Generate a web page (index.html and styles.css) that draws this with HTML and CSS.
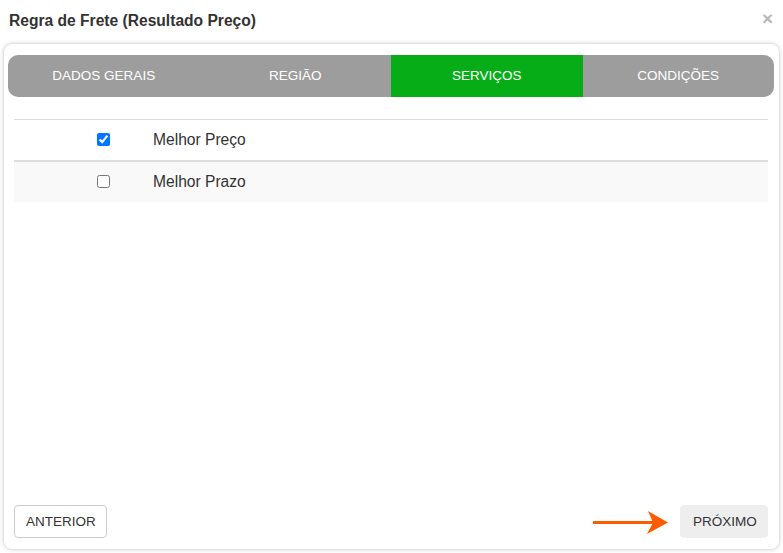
FILE: index.html
```html
<!DOCTYPE html>
<html lang="pt">
<head>
<meta charset="utf-8">
<title>Regra de Frete</title>
<link rel="stylesheet" href="styles.css">
</head>
<body>
<div class="modal">
  <div class="modal-header">
    <h1 class="modal-title">Regra de Frete (Resultado Preço)</h1>
    <span class="close">×</span>
  </div>
  <div class="panel">
    <div class="tabs">
      <div class="tab">DADOS GERAIS</div>
      <div class="tab">REGIÃO</div>
      <div class="tab active">SERVIÇOS</div>
      <div class="tab">CONDIÇÕES</div>
    </div>
    <div class="table">
      <div class="row">
        <div class="cell-check"><input type="checkbox" checked></div>
        <div class="cell-label">Melhor Preço</div>
      </div>
      <div class="row striped">
        <div class="cell-check"><input type="checkbox"></div>
        <div class="cell-label">Melhor Prazo</div>
      </div>
    </div>
    <div class="footer">
      <button class="btn btn-outline">ANTERIOR</button>
      <div class="next-group">
        <svg class="arrow" width="76" height="25" viewBox="0 0 76 25">
          <line x1="1" y1="12.5" x2="62" y2="12.5" stroke="#ff5b00" stroke-width="3"/>
          <polygon points="56,1 76,12.5 55,24 61,12.5" fill="#ff5b00"/>
        </svg>
        <button class="btn btn-light">PRÓXIMO</button>
      </div>
    </div>
  </div>
</div>
</body>
</html>
```
FILE: styles.css
```css
html, body {
  margin: 0;
  padding: 0;
  background: #ffffff;
}
body {
  font-family: "Liberation Sans", Arial, sans-serif;
  color: #333333;
  width: 783px;
  height: 553px;
  overflow: hidden;
}
.modal {
  display: flex;
  flex-direction: column;
  height: 553px;
}
.modal-header {
  height: 43px;
  box-sizing: border-box;
  padding: 11px 10px 0 9px;
  display: flex;
  justify-content: space-between;
  align-items: flex-start;
}
.modal-title {
  margin: 0;
  font-size: 15.6px;
  line-height: 19px;
  font-weight: bold;
  color: #333333;
}
.close {
  font-size: 19px;
  line-height: 14px;
  font-weight: bold;
  color: #b8b8b8;
  margin-top: 1px;
}
.panel {
  box-sizing: border-box;
  margin: 0 3px 0 3px;
  height: 507px;
  border: 1px solid #e2e2e2;
  border-radius: 9px;
  box-shadow: 0 0 4px rgba(0, 0, 0, 0.14);
  display: flex;
  flex-direction: column;
  padding: 11px 0 11px 0;
}
.tabs {
  display: flex;
  height: 42px;
  margin: 0 5px 0 4px;
  background: #9d9d9d;
  border-radius: 10px;
  overflow: hidden;
}
.tab {
  flex: 1;
  display: flex;
  align-items: center;
  justify-content: center;
  color: #ffffff;
  font-size: 13.5px;
  padding-bottom: 2px;
}
.tab.active {
  background: #07ad16;
}
.table {
  margin: 22px 11px 0 10px;
  border-top: 1px solid #dddddd;
}
.row {
  display: flex;
  align-items: center;
  height: 40px;
  padding-bottom: 1px;
  box-sizing: border-box;
}
.row.striped {
  height: 42px;
  border-top: 2px solid #dddddd;
  background: #f9f9f9;
}
.cell-check {
  width: 131px;
  box-sizing: border-box;
  padding-left: 83px;
  display: flex;
  align-items: center;
}
.cell-check input {
  margin: 0;
  width: 13px;
  height: 13px;
}
.cell-label {
  padding-left: 8px;
  font-size: 15.6px;
  color: #333333;
}
.footer {
  margin: auto 11px 0 10px;
  display: flex;
  justify-content: space-between;
  align-items: center;
}
.next-group {
  display: flex;
  align-items: center;
  gap: 12px;
}
.arrow {
  display: block;
  margin-top: 2px;
}
.btn {
  font-family: "Liberation Sans", Arial, sans-serif;
  font-size: 13.5px;
  color: #333333;
  height: 33px;
  box-sizing: border-box;
  border-radius: 4px;
  cursor: pointer;
  padding-bottom: 2px;
}
.btn-outline {
  background: #ffffff;
  border: 1px solid #cccccc;
  padding-left: 11px;
  padding-right: 11px;
  width: 93px;
}
.btn-light {
  background: #eeeeee;
  border: 1px solid #eeeeee;
  padding-left: 12px;
  padding-right: 12px;
  width: 88px;
}
```
